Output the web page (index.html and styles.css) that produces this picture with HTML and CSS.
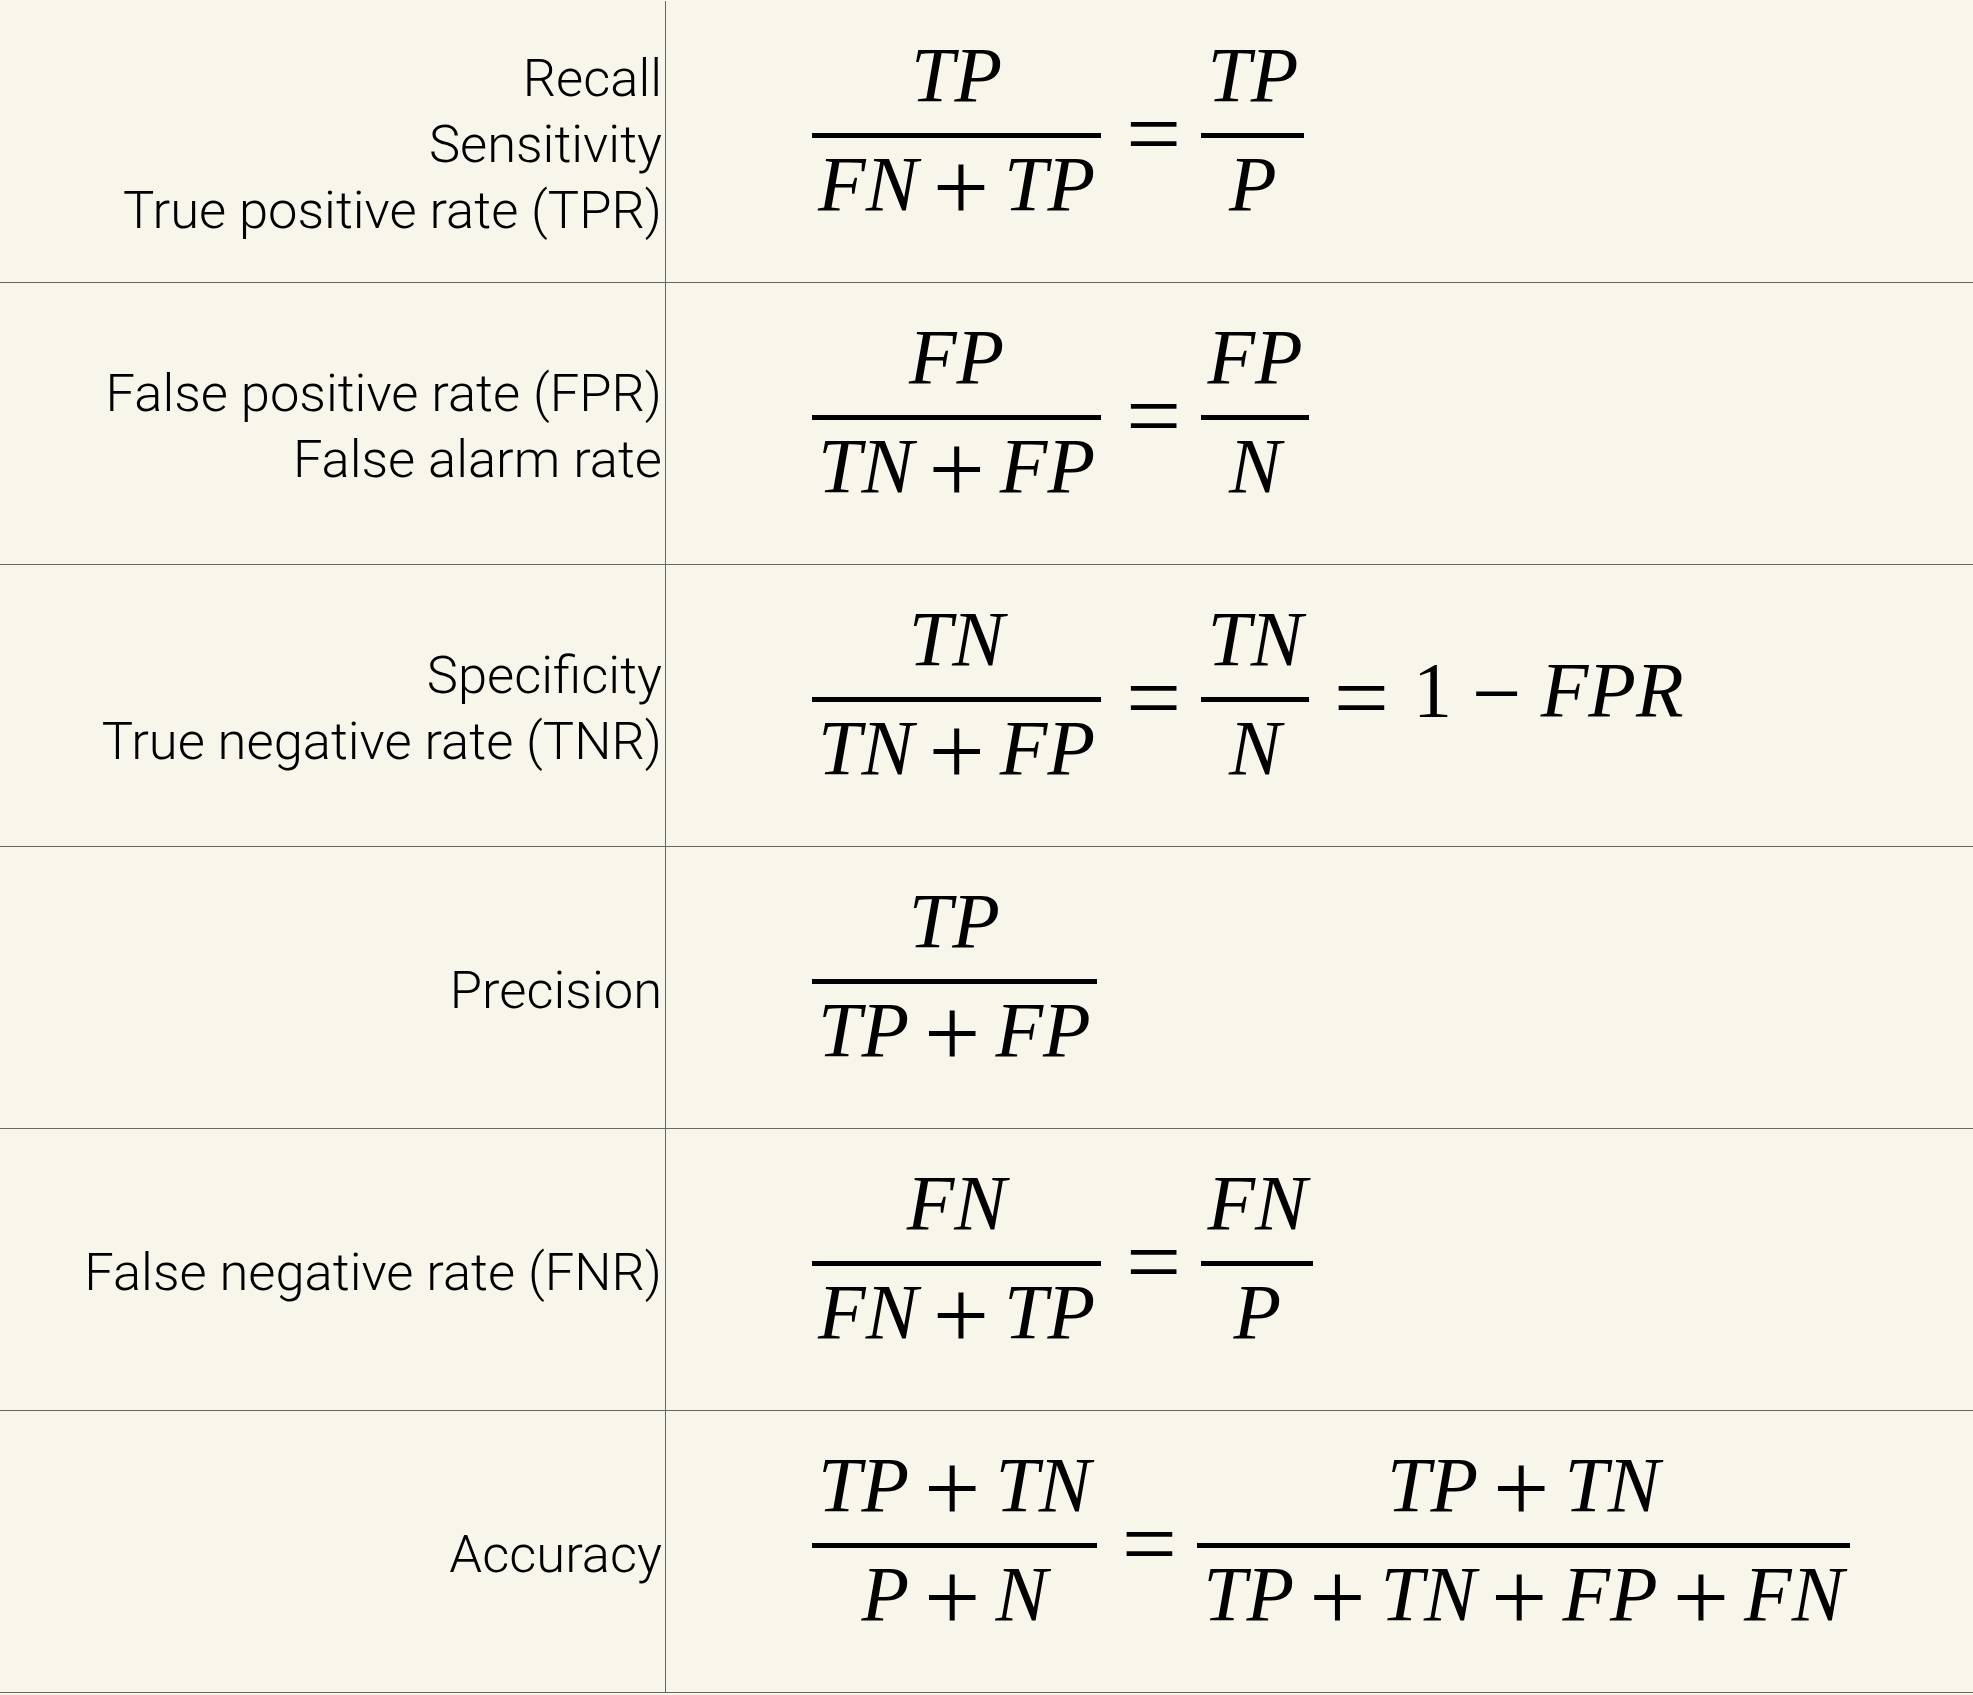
FILE: index.html
```html
<!DOCTYPE html>
<html lang="en">
<head>
<meta charset="utf-8">
<title>Classification metrics</title>
<link rel="stylesheet" href="styles.css">
</head>
<body>
<div class="table">
  <div class="row">
    <div class="label"><div>Recall</div><div>Sensitivity</div><div>True positive rate (TPR)</div></div>
    <div class="formula"><div class="math">
      <div class="frac"><div class="num"><span class="v">TP</span></div><div class="bar"></div><div class="den"><span class="v">FN</span><span class="op">+</span><span class="v">TP</span></div></div>
      <div class="rel">=</div>
      <div class="frac"><div class="num"><span class="v">TP</span></div><div class="bar"></div><div class="den"><span class="v">P</span></div></div>
    </div></div>
  </div>
  <div class="row">
    <div class="label"><div>False positive rate (FPR)</div><div>False alarm rate</div></div>
    <div class="formula"><div class="math">
      <div class="frac"><div class="num"><span class="v">FP</span></div><div class="bar"></div><div class="den"><span class="v">TN</span><span class="op">+</span><span class="v">FP</span></div></div>
      <div class="rel">=</div>
      <div class="frac"><div class="num"><span class="v">FP</span></div><div class="bar"></div><div class="den"><span class="v">N</span></div></div>
    </div></div>
  </div>
  <div class="row">
    <div class="label"><div>Specificity</div><div>True negative rate (TNR)</div></div>
    <div class="formula"><div class="math">
      <div class="frac"><div class="num"><span class="v">TN</span></div><div class="bar"></div><div class="den"><span class="v">TN</span><span class="op">+</span><span class="v">FP</span></div></div>
      <div class="rel">=</div>
      <div class="frac"><div class="num"><span class="v">TN</span></div><div class="bar"></div><div class="den"><span class="v">N</span></div></div>
      <div class="rel">=</div>
      <div class="expr">1<span class="minus">−</span><span class="v">FPR</span></div>
    </div></div>
  </div>
  <div class="row">
    <div class="label"><div>Precision</div></div>
    <div class="formula"><div class="math">
      <div class="frac"><div class="num"><span class="v">TP</span></div><div class="bar"></div><div class="den"><span class="v">TP</span><span class="op">+</span><span class="v">FP</span></div></div>
    </div></div>
  </div>
  <div class="row">
    <div class="label"><div>False negative rate (FNR)</div></div>
    <div class="formula"><div class="math">
      <div class="frac"><div class="num"><span class="v">FN</span></div><div class="bar"></div><div class="den"><span class="v">FN</span><span class="op">+</span><span class="v">TP</span></div></div>
      <div class="rel">=</div>
      <div class="frac"><div class="num"><span class="v">FN</span></div><div class="bar"></div><div class="den"><span class="v">P</span></div></div>
    </div></div>
  </div>
  <div class="row">
    <div class="label"><div>Accuracy</div></div>
    <div class="formula"><div class="math">
      <div class="frac"><div class="num"><span class="v">TP</span><span class="op">+</span><span class="v">TN</span></div><div class="bar"></div><div class="den"><span class="v">P</span><span class="op">+</span><span class="v">N</span></div></div>
      <div class="rel">=</div>
      <div class="frac"><div class="num"><span class="v">TP</span><span class="op">+</span><span class="v">TN</span></div><div class="bar"></div><div class="den"><span class="v">TP</span><span class="op">+</span><span class="v">TN</span><span class="op">+</span><span class="v">FP</span><span class="op">+</span><span class="v">FN</span></div></div>
    </div></div>
  </div>
</div>
</body>
</html>
```

FILE: styles.css
```css
html, body {
  margin: 0;
  padding: 0;
  background: #f8f6eb;
}

.table {
  width: 1973px;
  padding-top: 1px;
}

.row {
  display: flex;
  height: 281px;
  border-bottom: 1px solid #666;
}

.label {
  box-sizing: border-box;
  width: 666px;
  flex: none;
  border-right: 1px solid #666;
  display: flex;
  flex-direction: column;
  justify-content: center;
  align-items: flex-end;
  padding: 5px 3px 0 0;
  font-family: Roboto, "Liberation Sans", sans-serif;
  font-weight: 300;
  font-size: 52.5px;
  line-height: 66px;
  color: #000;
  white-space: nowrap;
}

.formula {
  flex: 1;
  display: flex;
  align-items: center;
  padding: 0 0 13px 146px;
}

.math {
  display: flex;
  align-items: center;
  font-family: "Liberation Serif", "Times New Roman", serif;
  font-size: 78px;
  line-height: 76px;
  color: #000;
  white-space: nowrap;
}

.v {
  font-style: italic;
}

.frac {
  display: flex;
  flex-direction: column;
  padding-bottom: 12px;
}

.num, .den {
  text-align: center;
  padding: 0 6px;
  height: 76px;
}

.bar {
  height: 5px;
  background: #000;
  margin: 20px 0 8px;
}

.op {
  font-size: 100px;
  margin: 0 15px;
  vertical-align: -11px;
}

.rel {
  font-size: 98px;
  line-height: 76px;
  padding-bottom: 4px;
  margin: 0 20px 0 25px;
}

.expr {
  line-height: 76px;
  padding-bottom: 15px;
  margin-left: 4px;
}

.minus {
  font-size: 88px;
  margin: 0 19px 0 20px;
  vertical-align: -7px;
}
```
